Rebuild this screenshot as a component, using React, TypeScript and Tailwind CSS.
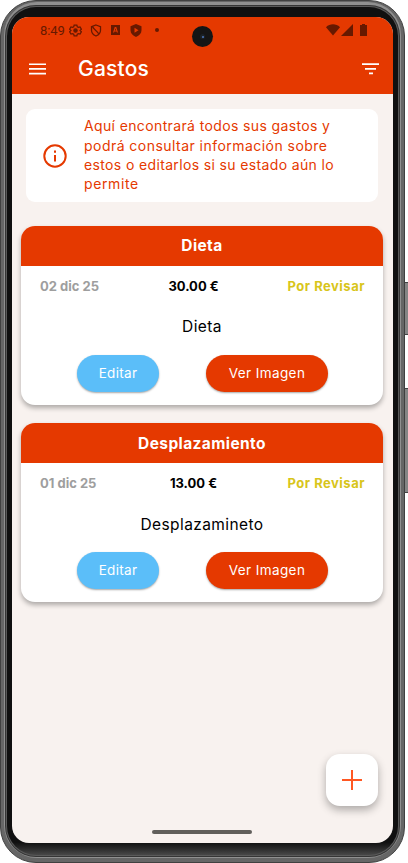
import type { ReactNode } from 'react';

type Expense = {
  id: number;
  category: string;
  date: string;
  amount: string;
  status: string;
  description: string;
};

const expenses: Expense[] = [
  { id: 1, category: 'Dieta', date: '02 dic 25', amount: '30.00 €', status: 'Por Revisar', description: 'Dieta' },
  { id: 2, category: 'Desplazamiento', date: '01 dic 25', amount: '13.00 €', status: 'Por Revisar', description: 'Desplazamineto' },
];

const infoLines = [
  { text: 'Aquí encontrará todos sus gastos y', tracking: 'tracking-[0.37px]' },
  { text: 'podrá consultar información sobre', tracking: 'tracking-[0.46px]' },
  { text: 'estos o editarlos si su estado aún lo', tracking: 'tracking-[0.36px]' },
  { text: 'permite', tracking: 'tracking-[0.6px]' },
];

function StatusBar() {
  return (
    <div className="relative flex h-[26px] shrink-0 items-center pl-7 pr-[25px] text-[#671900]">
      <span className="w-[29px] font-['Roboto',sans-serif] text-[13px] leading-none tracking-[-0.1px]">8:49</span>
      <svg className="h-[13px] w-[13px]" viewBox="0 0 24 24" fill="none" stroke="currentColor" strokeWidth="2.4">
        <path d="M9.5 2h5l.8 3.2 2 1.1 3.1-.9 2.5 4.3L20.5 12l2.4 2.3-2.5 4.3-3.1-.9-2 1.1-.8 3.2h-5l-.8-3.2-2-1.1-3.1.9-2.5-4.3L3.5 12 1.1 9.7l2.5-4.3 3.1.9 2-1.1z" />
        <circle cx="12" cy="12" r="3" fill="currentColor" />
      </svg>
      <svg className="ml-2 h-[13px] w-[12px]" viewBox="0 0 24 26" fill="none" stroke="currentColor" strokeWidth="2.6">
        <path d="M12 2l9 3.5v7c0 5.5-4 9.5-9 11.5-5-2-9-6-9-11.5v-7zM5 5c2 6 9 8 12 14" />
      </svg>
      <svg className="ml-[9px] h-[10px] w-[9px]" viewBox="0 0 18 20" fill="currentColor" fillRule="evenodd">
        <path d="M0 0h18v20H0zM7.5 4L4 15h2.2l.7-2.2h4.2l.7 2.200H14L10.5 4zM9 6.5l1.4 4.5H7.6z" />
      </svg>
      <svg className="ml-[10px] h-[13px] w-[12px]" viewBox="0 0 24 26" fill="currentColor" fillRule="evenodd">
        <path d="M12 0l11 4.5v8c0 6-4.5 11-11 13.5C5.5 23.5 1 18.5 1 12.5v-8zM9 7.5v10l8-5z" />
      </svg>
      <span className="ml-[13px] h-[4px] w-[4px] rounded-full bg-[#671900]" />
      <svg className="ml-auto h-[12px] w-[14px]" viewBox="0 0 14 12" fill="currentColor">
        <path d="M0 3.2C4 -.6 10 -.6 14 3.2L7 11.5z" />
      </svg>
      <svg className="ml-[1px] h-[12px] w-[12px]" viewBox="0 0 12 12" fill="currentColor">
        <path d="M12 0v12H0z" />
      </svg>
      <svg className="ml-[7px] mr-px h-[12px] w-[7px]" viewBox="0 0 7 12" fill="currentColor">
        <path d="M2 0h3v1h2v11H0V1h2z" />
      </svg>
      {/* front camera */}
      <div className="absolute left-[180px] top-[9px] flex h-[21px] w-[21px] items-center justify-center rounded-full bg-[#151515]">
        <div className="flex h-[5px] w-[5px] items-center justify-center rounded-full bg-[#1c2226]">
          <span className="h-[2px] w-[2px] rounded-full bg-[#4d76bd]" />
        </div>
      </div>
    </div>
  );
}

function AppBar() {
  return (
    <div className="flex h-[51px] shrink-0 items-center pl-[17px] pr-[14px] text-white">
      <svg className="h-[12px] w-[17px]" viewBox="0 0 17 12" fill="currentColor">
        <path d="M0 .4h17v1.7H0zM0 5.1h17v1.7H0zM0 9.8h17v1.7H0z" />
      </svg>
      <h1 className="ml-8 text-[21px] font-medium leading-none tracking-[0.2px]">Gastos</h1>
      <svg className="ml-auto h-[12px] w-[17px]" viewBox="0 0 17 12" fill="currentColor">
        <path d="M0 .2h17v1.8H0zM3 5h11v1.8H3zM7 9.5h4v1.8H7z" />
      </svg>
    </div>
  );
}

function PillButton({ className, children }: { className: string; children: ReactNode }) {
  return (
    <button
      className={`flex h-[37px] items-center justify-center rounded-full text-[13.5px] leading-none text-white shadow-[0_1px_2px_rgba(0,0,0,0.35)] ${className}`}
    >
      {children}
    </button>
  );
}

function ExpenseCard({ expense }: { expense: Expense }) {
  return (
    <article className="h-[179px] overflow-hidden rounded-[14px] bg-white shadow-[0_3px_5px_rgba(0,0,0,0.3)]">
      <h2 className="flex h-10 items-center justify-center bg-[#e53900] text-[15.5px] font-bold leading-none tracking-[0.4px] text-white">
        {expense.category}
      </h2>
      <div className="grid h-10 grid-cols-[1fr_auto_1fr] items-center pl-[19px] pr-[18px] text-[13px] font-bold leading-none">
        <span className="text-[#9e9e9e]">{expense.date}</span>
        <span className="-translate-x-[9px] text-black">{expense.amount}</span>
        <span className="text-right tracking-[0.5px] text-[#d8c51b]">{expense.status}</span>
      </div>
      <p className="flex h-[42px] items-center justify-center text-[15.5px] leading-none tracking-[0.4px] text-black">
        {expense.description}
      </p>
      <div className="mt-[7px] flex pl-14">
        <PillButton className="w-[82px] bg-[#5bbef9] tracking-[0.3px]">Editar</PillButton>
        <PillButton className="ml-[47px] w-[122px] bg-[#e53900] tracking-[0.4px]">Ver Imagen</PillButton>
      </div>
    </article>
  );
}

function Screen() {
  return (
    <main className="relative flex h-[826px] w-[381px] flex-col overflow-hidden rounded-[17px] bg-[#f8f2ef]">
      <header className="flex h-[77px] shrink-0 flex-col bg-[#e53900]">
        <StatusBar />
        <AppBar />
      </header>

      <section className="ml-[14px] mt-[15px] flex h-[93px] w-[352px] shrink-0 items-center rounded-[9px] bg-white pl-[17px] text-[#e53900]">
        <svg className="h-6 w-6 shrink-0" viewBox="0 0 24 24" fill="none" stroke="currentColor" strokeWidth="2">
          <circle cx="12" cy="12" r="10.7" />
          <path d="M12 11v6.5M12 6.500v2.2" />
        </svg>
        <p className="-mt-px ml-[17px] whitespace-nowrap text-[14px] leading-[19.4px]">
          {infoLines.map((line) => (
            <span key={line.text} className={`block ${line.tracking}`}>{line.text}</span>
          ))}
        </p>
      </section>

      <section className="ml-[9px] mt-6 flex w-[362px] flex-col gap-[18.3px]">
        {expenses.map((expense) => (
          <ExpenseCard key={expense.id} expense={expense} />
        ))}
      </section>

      <button className="absolute bottom-[37px] right-[15px] flex h-[52px] w-[52px] items-center justify-center rounded-[14px] bg-white text-[#ff5722] shadow-[0_4px_8px_rgba(0,0,0,0.3)]">
        <svg className="h-5 w-5" viewBox="0 0 20 20" fill="none" stroke="currentColor" strokeWidth="2">
          <path d="M10 0v20M0 10h20" />
        </svg>
      </button>
      {/* gesture handle */}
      <div className="absolute bottom-[9px] left-[140px] h-[4px] w-[100px] rounded-full bg-[#615f5b]" />
    </main>
  );
}

export default function App() {
  return (
    <div className="relative h-[863px] w-[408px] overflow-hidden bg-white font-['Inter','Open_Sans',sans-serif]">
      {/* power and volume keys */}
      <div className="absolute left-[402px] top-[282px] h-[53px] w-[7px] border border-[#444] bg-[#858585]" />
      <div className="absolute left-[402px] top-[388px] h-[105px] w-[7px] border border-[#444] bg-[#858585]" />

      {/* metal edge, highlight, bezel */}
      <div className="relative h-[863px] w-[405px] rounded-[36px] border border-[#404040] bg-[#666] px-[3px] pb-[4px] pt-px">
        <div className="h-full rounded-[33px] bg-[#909090] px-px pb-px pt-[3px]">
          <div className="h-full rounded-[31px] bg-[#353535] px-px pb-px pt-px">
            <div className="h-full rounded-[30px] bg-[#5a5a5a] p-px">
              <div className="h-full rounded-[29px] bg-gradient-to-b from-[#101010] from-[98.5%] to-[#484848] px-[5px] pt-[10px]">
                <Screen />
              </div>
            </div>
          </div>
        </div>
      </div>
    </div>
  );
}
